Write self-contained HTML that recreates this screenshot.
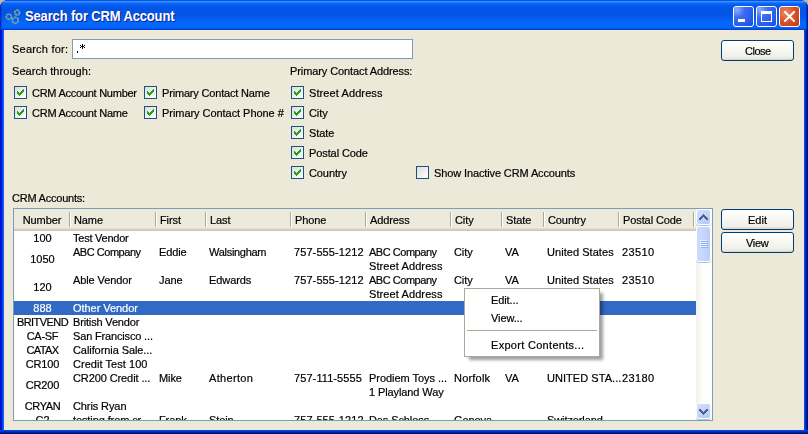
<!DOCTYPE html>
<html><head><meta charset="utf-8"><style>
*{margin:0;padding:0;box-sizing:border-box}
html,body{width:808px;height:434px;overflow:hidden;background:#BFB9A1}
body{position:relative;font-family:"Liberation Sans",sans-serif;font-size:11px;color:#000}
.a{position:absolute}
.t{position:absolute;line-height:14px;white-space:nowrap;-webkit-text-stroke:0.2px currentColor;will-change:transform}
#win{position:absolute;left:0;top:0;width:808px;height:434px;border-radius:8px 8px 0 0;overflow:hidden;background:#0831D9}
#title{position:absolute;left:0;top:0;width:808px;height:30px;background:linear-gradient(180deg,#0852E6 0px,#0852E6 1px,#3C92FF 1px,#3C92FF 2px,#2078FF 2px,#2078FF 3px,#0868FC 3px,#0868FC 4px,#0462F6 4px,#0462F6 5px,#045CEE 5px,#045CEE 6px,#0458EA 6px,#0458EA 7px,#0456E6 7px,#0456E6 8px,#0455E6 8px,#0455E6 9px,#0455E5 9px,#0455E5 10px,#0455E5 10px,#0455E5 11px,#0455E5 11px,#0455E5 12px,#0455E5 12px,#0455E5 13px,#0455E5 13px,#0455E5 14px,#0456E6 14px,#0456E6 15px,#0457E8 15px,#0457E8 16px,#0458EA 16px,#0458EA 17px,#045AEC 17px,#045AEC 18px,#045CEF 18px,#045CEF 19px,#045FF2 19px,#045FF2 20px,#0462F6 20px,#0462F6 21px,#0465F9 21px,#0465F9 22px,#0466FB 22px,#0466FB 23px,#0466FC 23px,#0466FC 24px,#0466FC 24px,#0466FC 25px,#0466FB 25px,#0466FB 26px,#0466FA 26px,#0466FA 27px,#0464F8 27px,#0464F8 28px,#005AEE 28px,#005AEE 29px,#0040D4 29px,#0040D4 30px)}
#lb{position:absolute;left:0;top:30px;width:4px;height:404px;background:linear-gradient(90deg,#0010D4 0px,#0010D4 1px,#0014D8 1px,#0014D8 2px,#1044E4 2px,#1044E4 3px,#0862F0 3px,#0862F0 4px)}
#lbt{position:absolute;left:0;top:3px;width:2px;height:27px;background:linear-gradient(90deg,#0028C8 0px,#0028C8 1px,#0846E0 1px,#0846E0 2px)}
#rbt{position:absolute;left:806px;top:3px;width:2px;height:27px;background:linear-gradient(90deg,#0034C8 0px,#0034C8 1px,#0020A0 1px,#0020A0 2px)}
#rb{position:absolute;left:804px;top:30px;width:4px;height:404px;background:linear-gradient(90deg,#0846EC 0px,#0846EC 1px,#0030C8 1px,#0030C8 2px,#001A98 2px,#001A98 3px,#00107E 3px,#00107E 4px)}
#bb{position:absolute;left:0;top:430px;width:808px;height:4px;background:linear-gradient(180deg,#0846E4 0px,#0846E4 1px,#0030C4 1px,#0030C4 2px,#001A98 2px,#001A98 3px,#00107E 3px,#00107E 4px)}
#client{position:absolute;left:4px;top:30px;width:800px;height:400px;background:#ECE9D8}
#ttl{position:absolute;left:25px;top:8px;font-weight:bold;font-size:13px;line-height:18px;color:#fff;text-shadow:1px 1px 0 #0A1E8C;letter-spacing:-0.15px;transform:scaleY(1.07);transform-origin:0 14px}
.wb{position:absolute;top:6px;width:21px;height:21px;border:1px solid #fff;border-radius:3px;background:radial-gradient(circle at 15% 15%,#8AAEFF 0,#3A6CF2 35%,#2A5CEA 70%,#1E4AD8 100%)}
.cb{position:absolute;width:13px;height:13px;border:1px solid #1C5180;background:linear-gradient(135deg,#DCDCD7 0%,#F6F6F3 70%,#FFFFFF 100%)}
.cb svg{position:absolute;left:2px;top:2px}
.btn{position:absolute;width:73px;height:21px;border:1px solid #003C74;border-radius:3px;background:linear-gradient(180deg,#FFFFFF 0%,#FAFAF7 30%,#F0F0EA 85%,#E3E0D5 95%,#D6D0C5 100%);text-align:center;line-height:20px}
.bt{display:inline-block;will-change:transform;-webkit-text-stroke:0.2px currentColor}
.sbtn{width:15px;height:16px;border:1px solid #fff;border-radius:3px;background:linear-gradient(135deg,#D2E0FE 0%,#C4D5FC 50%,#B2C7F7 100%);box-shadow:0 1px 0 #AFC0E6}
.sthumb{width:15px;border:1px solid #fff;border-radius:3px;background:linear-gradient(90deg,#CCDAFD 0%,#C6D6FC 50%,#BACEFA 100%);box-shadow:0 1px 0 #AFC0E6}
</style></head><body>
<div id="win"><div id="title"></div><div id="lbt"></div><div id="rbt"></div><div id="lb"></div><div id="rb"></div><div id="bb"></div><div id="client"></div></div>
<svg class="a" style="left:4px;top:7px" width="18" height="20" viewBox="0 0 18 20">
 <g fill="none" stroke="#74A2A6" stroke-width="1.8" stroke-dasharray="2.6 0.5">
  <circle cx="4.9" cy="9.7" r="2.6"/><circle cx="13.2" cy="5.6" r="2.4"/><circle cx="11.3" cy="13.3" r="3"/>
 </g></svg>
<div id="ttl">Search for CRM Account</div>
<div class="wb" style="left:733px"><div class="a" style="left:4px;top:12px;width:7px;height:3px;background:#fff"></div></div>
<div class="wb" style="left:756px"><div class="a" style="left:4px;top:4px;width:11px;height:11px;border:1px solid #fff;border-top-width:3px"></div></div>
<div class="wb" style="left:779px;background:radial-gradient(circle at 30% 30%,#E88A6A 0,#D85028 50%,#C23A10 100%)"><svg class="a" style="left:4px;top:4px" width="11" height="11" viewBox="0 0 11 11"><path d="M1 1L10 10M10 1L1 10" stroke="#fff" stroke-width="2" stroke-linecap="square"/></svg></div>
<div class="t" style="left:12px;top:42px;;letter-spacing:0.22px">Search for:</div>
<div class="a" style="left:72px;top:39px;width:341px;height:20px;border:1px solid #7F9DB9;background:#fff"></div>
<svg class="a" style="left:77px;top:44px" width="8" height="9" viewBox="0 0 8 9" shape-rendering="crispEdges"><path fill="#000" d="M0 7h1v2H0zM5 0h1v5H5zM3 1h1v1H3zM7 1h1v1H7zM4 2h3v1H4zM3 3h1v1H3zM7 3h1v1H7z"/></svg>
<div class="btn" style="left:721px;top:40px"><span class="bt" style="letter-spacing:-0.5px">Close</span></div>
<div class="t" style="left:12px;top:64px;;letter-spacing:0.05px">Search through:</div>
<div class="t" style="left:290px;top:64px;;letter-spacing:-0.1px">Primary Contact Address:</div>
<div class="cb" style="left:14px;top:86px"><svg width="7" height="7" viewBox="0 0 7 7" shape-rendering="crispEdges"><path fill="#21A121" d="M0 2h1v3H0zM1 3h1v3H1zM2 4h1v3H2zM3 3h1v3H3zM4 2h1v3H4zM5 1h1v3H5zM6 0h1v3H6z"/></svg></div>
<div class="t" style="left:32px;top:86px;;letter-spacing:-0.26px">CRM Account Number</div>
<div class="cb" style="left:14px;top:106px"><svg width="7" height="7" viewBox="0 0 7 7" shape-rendering="crispEdges"><path fill="#21A121" d="M0 2h1v3H0zM1 3h1v3H1zM2 4h1v3H2zM3 3h1v3H3zM4 2h1v3H4zM5 1h1v3H5zM6 0h1v3H6z"/></svg></div>
<div class="t" style="left:32px;top:106px;;letter-spacing:-0.25px">CRM Account Name</div>
<div class="cb" style="left:144px;top:86px"><svg width="7" height="7" viewBox="0 0 7 7" shape-rendering="crispEdges"><path fill="#21A121" d="M0 2h1v3H0zM1 3h1v3H1zM2 4h1v3H2zM3 3h1v3H3zM4 2h1v3H4zM5 1h1v3H5zM6 0h1v3H6z"/></svg></div>
<div class="t" style="left:162px;top:86px;;letter-spacing:-0.18px">Primary Contact Name</div>
<div class="cb" style="left:144px;top:106px"><svg width="7" height="7" viewBox="0 0 7 7" shape-rendering="crispEdges"><path fill="#21A121" d="M0 2h1v3H0zM1 3h1v3H1zM2 4h1v3H2zM3 3h1v3H3zM4 2h1v3H4zM5 1h1v3H5zM6 0h1v3H6z"/></svg></div>
<div class="t" style="left:162px;top:106px;;letter-spacing:-0.05px">Primary Contact Phone #</div>
<div class="cb" style="left:291px;top:86px"><svg width="7" height="7" viewBox="0 0 7 7" shape-rendering="crispEdges"><path fill="#21A121" d="M0 2h1v3H0zM1 3h1v3H1zM2 4h1v3H2zM3 3h1v3H3zM4 2h1v3H4zM5 1h1v3H5zM6 0h1v3H6z"/></svg></div>
<div class="t" style="left:309px;top:86px;;letter-spacing:0.1px">Street Address</div>
<div class="cb" style="left:291px;top:106px"><svg width="7" height="7" viewBox="0 0 7 7" shape-rendering="crispEdges"><path fill="#21A121" d="M0 2h1v3H0zM1 3h1v3H1zM2 4h1v3H2zM3 3h1v3H3zM4 2h1v3H4zM5 1h1v3H5zM6 0h1v3H6z"/></svg></div>
<div class="t" style="left:309px;top:106px;;letter-spacing:-0.1px">City</div>
<div class="cb" style="left:291px;top:126px"><svg width="7" height="7" viewBox="0 0 7 7" shape-rendering="crispEdges"><path fill="#21A121" d="M0 2h1v3H0zM1 3h1v3H1zM2 4h1v3H2zM3 3h1v3H3zM4 2h1v3H4zM5 1h1v3H5zM6 0h1v3H6z"/></svg></div>
<div class="t" style="left:309px;top:126px;;letter-spacing:-0.1px">State</div>
<div class="cb" style="left:291px;top:146px"><svg width="7" height="7" viewBox="0 0 7 7" shape-rendering="crispEdges"><path fill="#21A121" d="M0 2h1v3H0zM1 3h1v3H1zM2 4h1v3H2zM3 3h1v3H3zM4 2h1v3H4zM5 1h1v3H5zM6 0h1v3H6z"/></svg></div>
<div class="t" style="left:309px;top:146px;;letter-spacing:-0.1px">Postal Code</div>
<div class="cb" style="left:291px;top:166px"><svg width="7" height="7" viewBox="0 0 7 7" shape-rendering="crispEdges"><path fill="#21A121" d="M0 2h1v3H0zM1 3h1v3H1zM2 4h1v3H2zM3 3h1v3H3zM4 2h1v3H4zM5 1h1v3H5zM6 0h1v3H6z"/></svg></div>
<div class="t" style="left:309px;top:166px;;letter-spacing:-0.1px">Country</div>
<div class="cb" style="left:416px;top:166px"></div>
<div class="t" style="left:434px;top:166px;;letter-spacing:-0.12px">Show Inactive CRM Accounts</div>
<div class="t" style="left:12px;top:191px;;letter-spacing:-0.22px">CRM Accounts:</div>
<div class="btn" style="left:721px;top:209px"><span class="bt">Edit</span></div>
<div class="btn" style="left:721px;top:232px"><span class="bt" style="letter-spacing:-0.3px">View</span></div>
<div class="a" style="left:13px;top:208px;width:700px;height:213px;border:1px solid #7F9DB9;background:#fff"></div>
<div class="a" style="left:14px;top:209px;width:682px;height:22px;background:linear-gradient(180deg,#EBEADB 0px,#EBEADB 1px,#EBEADB 1px,#EBEADB 2px,#EBEADB 2px,#EBEADB 3px,#EBEADB 3px,#EBEADB 4px,#EBEADB 4px,#EBEADB 5px,#EBEADB 5px,#EBEADB 6px,#EBEADB 6px,#EBEADB 7px,#EBEADB 7px,#EBEADB 8px,#EBEADB 8px,#EBEADB 9px,#EBEADB 9px,#EBEADB 10px,#EBEADB 10px,#EBEADB 11px,#EBEADB 11px,#EBEADB 12px,#EBEADB 12px,#EBEADB 13px,#EBEADB 13px,#EBEADB 14px,#EBEADB 14px,#EBEADB 15px,#EBEADB 15px,#EBEADB 16px,#EBEADB 16px,#EBEADB 17px,#EBEADB 17px,#EBEADB 18px,#EDEBDE 18px,#EDEBDE 19px,#E2DECD 19px,#E2DECD 20px,#D6D2C2 20px,#D6D2C2 21px,#CBC7B8 21px,#CBC7B8 22px)"></div>
<div class="a" style="left:69px;top:212px;width:1px;height:15px;background:#ACA899"></div><div class="a" style="left:70px;top:212px;width:1px;height:15px;background:#fff"></div>
<div class="a" style="left:155px;top:212px;width:1px;height:15px;background:#ACA899"></div><div class="a" style="left:156px;top:212px;width:1px;height:15px;background:#fff"></div>
<div class="a" style="left:205px;top:212px;width:1px;height:15px;background:#ACA899"></div><div class="a" style="left:206px;top:212px;width:1px;height:15px;background:#fff"></div>
<div class="a" style="left:290px;top:212px;width:1px;height:15px;background:#ACA899"></div><div class="a" style="left:291px;top:212px;width:1px;height:15px;background:#fff"></div>
<div class="a" style="left:365px;top:212px;width:1px;height:15px;background:#ACA899"></div><div class="a" style="left:366px;top:212px;width:1px;height:15px;background:#fff"></div>
<div class="a" style="left:450px;top:212px;width:1px;height:15px;background:#ACA899"></div><div class="a" style="left:451px;top:212px;width:1px;height:15px;background:#fff"></div>
<div class="a" style="left:501px;top:212px;width:1px;height:15px;background:#ACA899"></div><div class="a" style="left:502px;top:212px;width:1px;height:15px;background:#fff"></div>
<div class="a" style="left:543px;top:212px;width:1px;height:15px;background:#ACA899"></div><div class="a" style="left:544px;top:212px;width:1px;height:15px;background:#fff"></div>
<div class="a" style="left:618px;top:212px;width:1px;height:15px;background:#ACA899"></div><div class="a" style="left:619px;top:212px;width:1px;height:15px;background:#fff"></div>
<div class="a" style="left:693px;top:212px;width:1px;height:15px;background:#ACA899"></div><div class="a" style="left:694px;top:212px;width:1px;height:15px;background:#fff"></div>
<div class="t" style="left:14px;top:213px;width:56px;text-align:center;letter-spacing:-0.1px">Number</div>
<div class="t" style="left:74px;top:213px;;letter-spacing:-0.1px">Name</div>
<div class="t" style="left:160px;top:213px;;letter-spacing:-0.1px">First</div>
<div class="t" style="left:210px;top:213px;;letter-spacing:-0.1px">Last</div>
<div class="t" style="left:295px;top:213px;;letter-spacing:-0.1px">Phone</div>
<div class="t" style="left:370px;top:213px;;letter-spacing:-0.1px">Address</div>
<div class="t" style="left:455px;top:213px;;letter-spacing:-0.1px">City</div>
<div class="t" style="left:506px;top:213px;;letter-spacing:-0.1px">State</div>
<div class="t" style="left:548px;top:213px;;letter-spacing:-0.1px">Country</div>
<div class="t" style="left:623px;top:213px;;letter-spacing:-0.1px">Postal Code</div>
<div class="a" style="left:14px;top:231px;width:682px;height:189px;overflow:hidden">
<div class="t" style="left:0px;top:0px;width:57px;text-align:center;color:#000;letter-spacing:0px">100</div>
<div class="t" style="left:59px;top:0px;color:#000;letter-spacing:-0.24px">Test Vendor</div>
<div class="t" style="left:0px;top:21px;width:57px;text-align:center;color:#000;letter-spacing:0px">1050</div>
<div class="t" style="left:59px;top:14px;color:#000;letter-spacing:-0.47px">ABC Company</div>
<div class="t" style="left:145px;top:14px;color:#000;letter-spacing:-0.1px">Eddie</div>
<div class="t" style="left:195px;top:14px;color:#000;letter-spacing:-0.29px">Walsingham</div>
<div class="t" style="left:280px;top:14px;color:#000;letter-spacing:0.09px">757-555-1212</div>
<div class="t" style="left:355px;top:14px;color:#000;letter-spacing:-0.47px">ABC Company</div>
<div class="t" style="left:355px;top:28px;color:#000;letter-spacing:0.1px">Street Address</div>
<div class="t" style="left:440px;top:14px;color:#000;letter-spacing:-0.1px">City</div>
<div class="t" style="left:491px;top:14px;color:#000;letter-spacing:-0.1px">VA</div>
<div class="t" style="left:533px;top:14px;color:#000;letter-spacing:0.05px">United States</div>
<div class="t" style="left:608px;top:14px;color:#000;letter-spacing:0.4px">23510</div>
<div class="t" style="left:0px;top:49px;width:57px;text-align:center;color:#000;letter-spacing:0px">120</div>
<div class="t" style="left:59px;top:42px;color:#000;letter-spacing:-0.1px">Able Vendor</div>
<div class="t" style="left:145px;top:42px;color:#000;letter-spacing:-0.1px">Jane</div>
<div class="t" style="left:195px;top:42px;color:#000;letter-spacing:-0.08px">Edwards</div>
<div class="t" style="left:280px;top:42px;color:#000;letter-spacing:0.09px">757-555-1212</div>
<div class="t" style="left:355px;top:42px;color:#000;letter-spacing:-0.47px">ABC Company</div>
<div class="t" style="left:355px;top:56px;color:#000;letter-spacing:0.1px">Street Address</div>
<div class="t" style="left:440px;top:42px;color:#000;letter-spacing:-0.1px">City</div>
<div class="t" style="left:491px;top:42px;color:#000;letter-spacing:-0.1px">VA</div>
<div class="t" style="left:533px;top:42px;color:#000;letter-spacing:0.05px">United States</div>
<div class="t" style="left:608px;top:42px;color:#000;letter-spacing:0.4px">23510</div>
<div class="a" style="left:0;top:70px;width:682px;height:14px;background:#316AC5"></div>
<div class="t" style="left:0px;top:70px;width:57px;text-align:center;color:#fff;letter-spacing:0px">888</div>
<div class="t" style="left:59px;top:70px;color:#fff;letter-spacing:-0.05px">Other Vendor</div>
<div class="t" style="left:0px;top:84px;width:57px;text-align:center;color:#000;letter-spacing:-0.57px">BRITVEND</div>
<div class="t" style="left:59px;top:84px;color:#000;letter-spacing:-0.16px">British Vendor</div>
<div class="t" style="left:0px;top:98px;width:57px;text-align:center;color:#000;letter-spacing:-0.27px">CA-SF</div>
<div class="t" style="left:59px;top:98px;color:#000;letter-spacing:-0.16px">San Francisco ...</div>
<div class="t" style="left:0px;top:112px;width:57px;text-align:center;color:#000;letter-spacing:-0.6px">CATAX</div>
<div class="t" style="left:59px;top:112px;color:#000;letter-spacing:-0.08px">California Sale...</div>
<div class="t" style="left:0px;top:126px;width:57px;text-align:center;color:#000;letter-spacing:-0.1px">CR100</div>
<div class="t" style="left:59px;top:126px;color:#000;letter-spacing:0.05px">Credit Test 100</div>
<div class="t" style="left:0px;top:147px;width:57px;text-align:center;color:#000;letter-spacing:-0.1px">CR200</div>
<div class="t" style="left:59px;top:140px;color:#000;letter-spacing:-0.1px">CR200 Credit ...</div>
<div class="t" style="left:145px;top:140px;color:#000;letter-spacing:-0.1px">Mike</div>
<div class="t" style="left:195px;top:140px;color:#000;letter-spacing:0.33px">Atherton</div>
<div class="t" style="left:280px;top:140px;color:#000;letter-spacing:0.09px">757-111-5555</div>
<div class="t" style="left:355px;top:140px;color:#000;letter-spacing:-0.04px">Prodiem Toys ...</div>
<div class="t" style="left:355px;top:154px;color:#000;letter-spacing:-0.1px">1 Playland Way</div>
<div class="t" style="left:440px;top:140px;color:#000;letter-spacing:0.2px">Norfolk</div>
<div class="t" style="left:491px;top:140px;color:#000;letter-spacing:-0.1px">VA</div>
<div class="t" style="left:533px;top:140px;color:#000;letter-spacing:0.05px">UNITED STA...</div>
<div class="t" style="left:608px;top:140px;color:#000;letter-spacing:0.4px">23180</div>
<div class="t" style="left:0px;top:168px;width:57px;text-align:center;color:#000;letter-spacing:-0.4px">CRYAN</div>
<div class="t" style="left:59px;top:168px;color:#000;letter-spacing:-0.1px">Chris Ryan</div>
<div class="t" style="left:0px;top:182px;width:57px;text-align:center;color:#000;letter-spacing:-0.1px">C2</div>
<div class="t" style="left:59px;top:182px;color:#000;letter-spacing:-0.1px">testing from cr...</div>
<div class="t" style="left:145px;top:182px;color:#000;letter-spacing:-0.1px">Frank</div>
<div class="t" style="left:195px;top:182px;color:#000;letter-spacing:-0.1px">Stein</div>
<div class="t" style="left:280px;top:182px;color:#000;letter-spacing:0.09px">757-555-1212</div>
<div class="t" style="left:355px;top:182px;color:#000;letter-spacing:-0.1px">Das Schloss</div>
<div class="t" style="left:440px;top:182px;color:#000;letter-spacing:-0.1px">Geneva</div>
<div class="t" style="left:533px;top:182px;color:#000;letter-spacing:-0.1px">Switzerland</div>
</div>
<div class="a" style="left:696px;top:209px;width:16px;height:211px;background:linear-gradient(90deg,#F3F1EC 0,#FEFEFB 40%,#FEFEFB 100%)"></div>
<div class="a sbtn" style="left:696px;top:209px"><svg class="a" style="left:2px;top:4px" width="9" height="6" viewBox="0 0 9 6" shape-rendering="crispEdges"><path fill="#4D6185" d="M4 0h1v1H4zM3 1h3v1H3zM2 2h5v1H2zM1 3h3v1H1zM5 3h3v1H5zM0 4h3v1H0zM6 4h3v1H6zM0 5h2v1H0zM7 5h2v1H7z"/></svg></div>
<div class="a sthumb" style="left:696px;top:226px;height:36px"><svg class="a" style="left:3px;top:13px" width="8" height="8" viewBox="0 0 8 8" shape-rendering="crispEdges"><path fill="#EEF4FE" d="M0 0h7v1H0zM0 2h7v1H0zM0 4h7v1H0zM0 6h7v1H0z"/><path fill="#8CB0F8" d="M1 1h7v1H1zM1 3h7v1H1zM1 5h7v1H1zM1 7h7v1H1z"/></svg></div>
<div class="a sbtn" style="left:696px;top:403px"><svg class="a" style="left:2px;top:5px" width="9" height="6" viewBox="0 0 9 6" shape-rendering="crispEdges"><path fill="#4D6185" d="M4 5h1v1H4zM3 4h3v1H3zM2 3h5v1H2zM1 2h3v1H1zM5 2h3v1H5zM0 1h3v1H0zM6 1h3v1H6zM0 0h2v1H0zM7 0h2v1H7z"/></svg></div>
<div class="a" style="left:464px;top:288px;width:136px;height:69px;border:1px solid #ACA899;background:#fff;box-shadow:4px 4px 3px -1px rgba(0,0,0,0.38)"></div>
<div class="t" style="left:491px;top:293px;;letter-spacing:-0.1px">Edit...</div>
<div class="t" style="left:491px;top:311px;;letter-spacing:-0.1px">View...</div>
<div class="a" style="left:467px;top:330px;width:130px;height:1px;background:#ACA899"></div>
<div class="t" style="left:491px;top:338px;;letter-spacing:0.3px">Export Contents...</div>
</body></html>
